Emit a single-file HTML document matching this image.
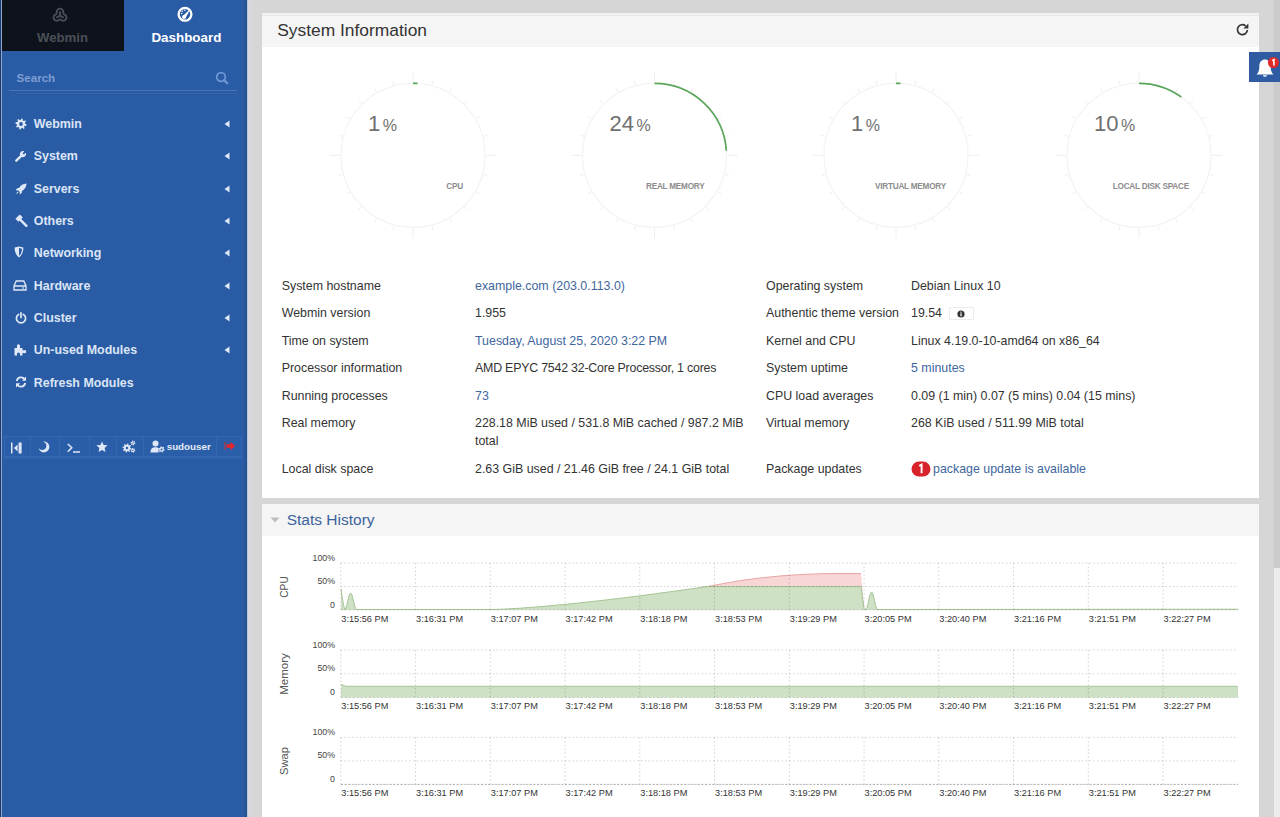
<!DOCTYPE html>
<html><head><meta charset="utf-8"><style>
html,body{margin:0;padding:0;}
body{width:1280px;height:817px;overflow:hidden;position:relative;background:#d6d6d6;font-family:"Liberation Sans", sans-serif;}
.t{position:absolute;white-space:nowrap;line-height:1;}
.r{position:absolute;}
.a{position:absolute;overflow:visible;}
</style></head><body>
<div class="r" style="left:0px;top:0px;width:247px;height:817px;background:#2a5ca6;"></div>
<div class="r" style="left:244px;top:0px;width:3px;height:817px;background:#2a5597;"></div>
<div class="r" style="left:246px;top:0px;width:1px;height:817px;background:#24508f;"></div>
<div class="r" style="left:247px;top:0px;width:1px;height:817px;background:#b9c9e0;"></div>
<div class="r" style="left:248px;top:0px;width:5px;height:817px;background:#d6d8dc;"></div>
<div class="r" style="left:0px;top:0px;width:124px;height:51px;background:#0e131b;"></div>
<div class="r" style="left:0px;top:0px;width:1px;height:817px;background:#1c3a68;"></div>
<div class="r" style="left:1px;top:0px;width:1px;height:817px;background:#8ea7cf;"></div>
<div class="t" style="left:37.00px;top:31.13px;font-size:13.2px;color:#4a4f57;font-weight:bold;">Webmin</div>
<div class="t" style="left:151.40px;top:31.16px;font-size:13.4px;color:#ffffff;font-weight:bold;">Dashboard</div>
<div class="t" style="left:16.50px;top:72.18px;font-size:11.6px;color:#7d9dd2;font-weight:bold;">Search</div>
<div class="r" style="left:9px;top:90px;width:228px;height:1px;background:#4a76b8;"></div>
<div class="r" style="left:16px;top:93px;width:221px;height:1px;background:#3567b0;"></div>
<div class="t" style="left:33.80px;top:118.10px;font-size:12.4px;color:#dbe5f5;font-weight:bold;">Webmin</div>
<svg class="a" style="left:224px;top:120.1px" width="6" height="8"><path d="M5.5 0.5 L0.5 4 L5.5 7.5Z" fill="#dfe8f6"/></svg>
<div class="t" style="left:33.80px;top:150.40px;font-size:12.4px;color:#dbe5f5;font-weight:bold;">System</div>
<svg class="a" style="left:224px;top:152.4px" width="6" height="8"><path d="M5.5 0.5 L0.5 4 L5.5 7.5Z" fill="#dfe8f6"/></svg>
<div class="t" style="left:33.80px;top:182.70px;font-size:12.4px;color:#dbe5f5;font-weight:bold;">Servers</div>
<svg class="a" style="left:224px;top:184.7px" width="6" height="8"><path d="M5.5 0.5 L0.5 4 L5.5 7.5Z" fill="#dfe8f6"/></svg>
<div class="t" style="left:33.80px;top:215.00px;font-size:12.4px;color:#dbe5f5;font-weight:bold;">Others</div>
<svg class="a" style="left:224px;top:217.0px" width="6" height="8"><path d="M5.5 0.5 L0.5 4 L5.5 7.5Z" fill="#dfe8f6"/></svg>
<div class="t" style="left:33.80px;top:247.30px;font-size:12.4px;color:#dbe5f5;font-weight:bold;">Networking</div>
<svg class="a" style="left:224px;top:249.3px" width="6" height="8"><path d="M5.5 0.5 L0.5 4 L5.5 7.5Z" fill="#dfe8f6"/></svg>
<div class="t" style="left:33.80px;top:279.60px;font-size:12.4px;color:#dbe5f5;font-weight:bold;">Hardware</div>
<svg class="a" style="left:224px;top:281.6px" width="6" height="8"><path d="M5.5 0.5 L0.5 4 L5.5 7.5Z" fill="#dfe8f6"/></svg>
<div class="t" style="left:33.80px;top:311.90px;font-size:12.4px;color:#dbe5f5;font-weight:bold;">Cluster</div>
<svg class="a" style="left:224px;top:313.9px" width="6" height="8"><path d="M5.5 0.5 L0.5 4 L5.5 7.5Z" fill="#dfe8f6"/></svg>
<div class="t" style="left:33.80px;top:344.20px;font-size:12.4px;color:#dbe5f5;font-weight:bold;">Un-used Modules</div>
<svg class="a" style="left:224px;top:346.2px" width="6" height="8"><path d="M5.5 0.5 L0.5 4 L5.5 7.5Z" fill="#dfe8f6"/></svg>
<div class="t" style="left:33.80px;top:376.50px;font-size:12.4px;color:#dbe5f5;font-weight:bold;">Refresh Modules</div>
<div class="r" style="left:4px;top:436px;width:238px;height:21px;background:#2b5ea9;border:1px solid #3568b3;box-sizing:border-box"></div>
<div class="r" style="left:4px;top:457px;width:238px;height:2px;background:#3063ad;"></div>
<div class="t" style="left:166.70px;top:442.00px;font-size:9.8px;color:#e3ebf7;font-weight:bold;">sudouser</div>
<div class="r" style="left:1273px;top:0px;width:1px;height:568px;background:#d0d0d0;"></div>
<div class="r" style="left:1274px;top:0px;width:6px;height:568px;background:#cbcbcb;"></div>
<div class="r" style="left:1274px;top:568px;width:6px;height:249px;background:#ececec;"></div>
<div class="r" style="left:262px;top:13px;width:997px;height:485px;background:#ffffff;"></div>
<div class="r" style="left:262px;top:13px;width:997px;height:34px;background:#f5f5f5;"></div>
<div class="r" style="left:262px;top:13px;width:997px;height:2px;background:#f1f1f1;"></div>
<div class="r" style="left:262px;top:15px;width:997px;height:1px;background:#e8e8e8;"></div>
<div class="t" style="left:277.20px;top:21.97px;font-size:17.4px;color:#333333;font-weight:normal;">System Information</div>
<div class="r" style="left:262px;top:504px;width:997px;height:313px;background:#ffffff;"></div>
<div class="r" style="left:262px;top:504px;width:997px;height:32px;background:#f5f5f5;"></div>
<div class="t" style="left:286.70px;top:511.88px;font-size:15.5px;color:#3b639b;font-weight:normal;">Stats History</div>
<svg class="a" style="left:270px;top:517px" width="10" height="6"><path d="M0.5 0.5 L9.5 0.5 L5 5.5Z" fill="#bdbdbd"/></svg>
<svg class="a" style="left:262px;top:47px" width="997" height="200">
<circle cx="151" cy="108.30000000000001" r="72" fill="none" stroke="#f4f4f4" stroke-width="1.3"/>
<line x1="151.00" y1="35.30" x2="151.00" y2="25.30" stroke="#eeeeee" stroke-width="1"/>
<line x1="169.89" y1="37.79" x2="170.93" y2="33.92" stroke="#eeeeee" stroke-width="1"/>
<line x1="187.50" y1="45.08" x2="189.50" y2="41.62" stroke="#eeeeee" stroke-width="1"/>
<line x1="202.62" y1="56.68" x2="205.45" y2="53.85" stroke="#eeeeee" stroke-width="1"/>
<line x1="214.22" y1="71.80" x2="217.68" y2="69.80" stroke="#eeeeee" stroke-width="1"/>
<line x1="221.51" y1="89.41" x2="225.38" y2="88.37" stroke="#eeeeee" stroke-width="1"/>
<line x1="224.00" y1="108.30" x2="234.00" y2="108.30" stroke="#eeeeee" stroke-width="1"/>
<line x1="221.51" y1="127.19" x2="225.38" y2="128.23" stroke="#eeeeee" stroke-width="1"/>
<line x1="214.22" y1="144.80" x2="217.68" y2="146.80" stroke="#eeeeee" stroke-width="1"/>
<line x1="202.62" y1="159.92" x2="205.45" y2="162.75" stroke="#eeeeee" stroke-width="1"/>
<line x1="187.50" y1="171.52" x2="189.50" y2="174.98" stroke="#eeeeee" stroke-width="1"/>
<line x1="169.89" y1="178.81" x2="170.93" y2="182.68" stroke="#eeeeee" stroke-width="1"/>
<line x1="151.00" y1="181.30" x2="151.00" y2="191.30" stroke="#eeeeee" stroke-width="1"/>
<line x1="132.11" y1="178.81" x2="131.07" y2="182.68" stroke="#eeeeee" stroke-width="1"/>
<line x1="114.50" y1="171.52" x2="112.50" y2="174.98" stroke="#eeeeee" stroke-width="1"/>
<line x1="99.38" y1="159.92" x2="96.55" y2="162.75" stroke="#eeeeee" stroke-width="1"/>
<line x1="87.78" y1="144.80" x2="84.32" y2="146.80" stroke="#eeeeee" stroke-width="1"/>
<line x1="80.49" y1="127.19" x2="76.62" y2="128.23" stroke="#eeeeee" stroke-width="1"/>
<line x1="78.00" y1="108.30" x2="68.00" y2="108.30" stroke="#eeeeee" stroke-width="1"/>
<line x1="80.49" y1="89.41" x2="76.62" y2="88.37" stroke="#eeeeee" stroke-width="1"/>
<line x1="87.78" y1="71.80" x2="84.32" y2="69.80" stroke="#eeeeee" stroke-width="1"/>
<line x1="99.38" y1="56.68" x2="96.55" y2="53.85" stroke="#eeeeee" stroke-width="1"/>
<line x1="114.50" y1="45.08" x2="112.50" y2="41.62" stroke="#eeeeee" stroke-width="1"/>
<line x1="132.11" y1="37.79" x2="131.07" y2="33.92" stroke="#eeeeee" stroke-width="1"/>
<path d="M151 36.30000000000001 A72 72 0 0 1 155.52 36.44" fill="none" stroke="#5aa65a" stroke-width="1.7"/>
<circle cx="392.5" cy="108.30000000000001" r="72" fill="none" stroke="#f4f4f4" stroke-width="1.3"/>
<line x1="392.50" y1="35.30" x2="392.50" y2="25.30" stroke="#eeeeee" stroke-width="1"/>
<line x1="411.39" y1="37.79" x2="412.43" y2="33.92" stroke="#eeeeee" stroke-width="1"/>
<line x1="429.00" y1="45.08" x2="431.00" y2="41.62" stroke="#eeeeee" stroke-width="1"/>
<line x1="444.12" y1="56.68" x2="446.95" y2="53.85" stroke="#eeeeee" stroke-width="1"/>
<line x1="455.72" y1="71.80" x2="459.18" y2="69.80" stroke="#eeeeee" stroke-width="1"/>
<line x1="463.01" y1="89.41" x2="466.88" y2="88.37" stroke="#eeeeee" stroke-width="1"/>
<line x1="465.50" y1="108.30" x2="475.50" y2="108.30" stroke="#eeeeee" stroke-width="1"/>
<line x1="463.01" y1="127.19" x2="466.88" y2="128.23" stroke="#eeeeee" stroke-width="1"/>
<line x1="455.72" y1="144.80" x2="459.18" y2="146.80" stroke="#eeeeee" stroke-width="1"/>
<line x1="444.12" y1="159.92" x2="446.95" y2="162.75" stroke="#eeeeee" stroke-width="1"/>
<line x1="429.00" y1="171.52" x2="431.00" y2="174.98" stroke="#eeeeee" stroke-width="1"/>
<line x1="411.39" y1="178.81" x2="412.43" y2="182.68" stroke="#eeeeee" stroke-width="1"/>
<line x1="392.50" y1="181.30" x2="392.50" y2="191.30" stroke="#eeeeee" stroke-width="1"/>
<line x1="373.61" y1="178.81" x2="372.57" y2="182.68" stroke="#eeeeee" stroke-width="1"/>
<line x1="356.00" y1="171.52" x2="354.00" y2="174.98" stroke="#eeeeee" stroke-width="1"/>
<line x1="340.88" y1="159.92" x2="338.05" y2="162.75" stroke="#eeeeee" stroke-width="1"/>
<line x1="329.28" y1="144.80" x2="325.82" y2="146.80" stroke="#eeeeee" stroke-width="1"/>
<line x1="321.99" y1="127.19" x2="318.12" y2="128.23" stroke="#eeeeee" stroke-width="1"/>
<line x1="319.50" y1="108.30" x2="309.50" y2="108.30" stroke="#eeeeee" stroke-width="1"/>
<line x1="321.99" y1="89.41" x2="318.12" y2="88.37" stroke="#eeeeee" stroke-width="1"/>
<line x1="329.28" y1="71.80" x2="325.82" y2="69.80" stroke="#eeeeee" stroke-width="1"/>
<line x1="340.88" y1="56.68" x2="338.05" y2="53.85" stroke="#eeeeee" stroke-width="1"/>
<line x1="356.00" y1="45.08" x2="354.00" y2="41.62" stroke="#eeeeee" stroke-width="1"/>
<line x1="373.61" y1="37.79" x2="372.57" y2="33.92" stroke="#eeeeee" stroke-width="1"/>
<path d="M392.5 36.30000000000001 A72 72 0 0 1 464.36 103.78" fill="none" stroke="#5aa65a" stroke-width="1.7"/>
<circle cx="634" cy="108.30000000000001" r="72" fill="none" stroke="#f4f4f4" stroke-width="1.3"/>
<line x1="634.00" y1="35.30" x2="634.00" y2="25.30" stroke="#eeeeee" stroke-width="1"/>
<line x1="652.89" y1="37.79" x2="653.93" y2="33.92" stroke="#eeeeee" stroke-width="1"/>
<line x1="670.50" y1="45.08" x2="672.50" y2="41.62" stroke="#eeeeee" stroke-width="1"/>
<line x1="685.62" y1="56.68" x2="688.45" y2="53.85" stroke="#eeeeee" stroke-width="1"/>
<line x1="697.22" y1="71.80" x2="700.68" y2="69.80" stroke="#eeeeee" stroke-width="1"/>
<line x1="704.51" y1="89.41" x2="708.38" y2="88.37" stroke="#eeeeee" stroke-width="1"/>
<line x1="707.00" y1="108.30" x2="717.00" y2="108.30" stroke="#eeeeee" stroke-width="1"/>
<line x1="704.51" y1="127.19" x2="708.38" y2="128.23" stroke="#eeeeee" stroke-width="1"/>
<line x1="697.22" y1="144.80" x2="700.68" y2="146.80" stroke="#eeeeee" stroke-width="1"/>
<line x1="685.62" y1="159.92" x2="688.45" y2="162.75" stroke="#eeeeee" stroke-width="1"/>
<line x1="670.50" y1="171.52" x2="672.50" y2="174.98" stroke="#eeeeee" stroke-width="1"/>
<line x1="652.89" y1="178.81" x2="653.93" y2="182.68" stroke="#eeeeee" stroke-width="1"/>
<line x1="634.00" y1="181.30" x2="634.00" y2="191.30" stroke="#eeeeee" stroke-width="1"/>
<line x1="615.11" y1="178.81" x2="614.07" y2="182.68" stroke="#eeeeee" stroke-width="1"/>
<line x1="597.50" y1="171.52" x2="595.50" y2="174.98" stroke="#eeeeee" stroke-width="1"/>
<line x1="582.38" y1="159.92" x2="579.55" y2="162.75" stroke="#eeeeee" stroke-width="1"/>
<line x1="570.78" y1="144.80" x2="567.32" y2="146.80" stroke="#eeeeee" stroke-width="1"/>
<line x1="563.49" y1="127.19" x2="559.62" y2="128.23" stroke="#eeeeee" stroke-width="1"/>
<line x1="561.00" y1="108.30" x2="551.00" y2="108.30" stroke="#eeeeee" stroke-width="1"/>
<line x1="563.49" y1="89.41" x2="559.62" y2="88.37" stroke="#eeeeee" stroke-width="1"/>
<line x1="570.78" y1="71.80" x2="567.32" y2="69.80" stroke="#eeeeee" stroke-width="1"/>
<line x1="582.38" y1="56.68" x2="579.55" y2="53.85" stroke="#eeeeee" stroke-width="1"/>
<line x1="597.50" y1="45.08" x2="595.50" y2="41.62" stroke="#eeeeee" stroke-width="1"/>
<line x1="615.11" y1="37.79" x2="614.07" y2="33.92" stroke="#eeeeee" stroke-width="1"/>
<path d="M634 36.30000000000001 A72 72 0 0 1 638.52 36.44" fill="none" stroke="#5aa65a" stroke-width="1.7"/>
<circle cx="877" cy="108.30000000000001" r="72" fill="none" stroke="#f4f4f4" stroke-width="1.3"/>
<line x1="877.00" y1="35.30" x2="877.00" y2="25.30" stroke="#eeeeee" stroke-width="1"/>
<line x1="895.89" y1="37.79" x2="896.93" y2="33.92" stroke="#eeeeee" stroke-width="1"/>
<line x1="913.50" y1="45.08" x2="915.50" y2="41.62" stroke="#eeeeee" stroke-width="1"/>
<line x1="928.62" y1="56.68" x2="931.45" y2="53.85" stroke="#eeeeee" stroke-width="1"/>
<line x1="940.22" y1="71.80" x2="943.68" y2="69.80" stroke="#eeeeee" stroke-width="1"/>
<line x1="947.51" y1="89.41" x2="951.38" y2="88.37" stroke="#eeeeee" stroke-width="1"/>
<line x1="950.00" y1="108.30" x2="960.00" y2="108.30" stroke="#eeeeee" stroke-width="1"/>
<line x1="947.51" y1="127.19" x2="951.38" y2="128.23" stroke="#eeeeee" stroke-width="1"/>
<line x1="940.22" y1="144.80" x2="943.68" y2="146.80" stroke="#eeeeee" stroke-width="1"/>
<line x1="928.62" y1="159.92" x2="931.45" y2="162.75" stroke="#eeeeee" stroke-width="1"/>
<line x1="913.50" y1="171.52" x2="915.50" y2="174.98" stroke="#eeeeee" stroke-width="1"/>
<line x1="895.89" y1="178.81" x2="896.93" y2="182.68" stroke="#eeeeee" stroke-width="1"/>
<line x1="877.00" y1="181.30" x2="877.00" y2="191.30" stroke="#eeeeee" stroke-width="1"/>
<line x1="858.11" y1="178.81" x2="857.07" y2="182.68" stroke="#eeeeee" stroke-width="1"/>
<line x1="840.50" y1="171.52" x2="838.50" y2="174.98" stroke="#eeeeee" stroke-width="1"/>
<line x1="825.38" y1="159.92" x2="822.55" y2="162.75" stroke="#eeeeee" stroke-width="1"/>
<line x1="813.78" y1="144.80" x2="810.32" y2="146.80" stroke="#eeeeee" stroke-width="1"/>
<line x1="806.49" y1="127.19" x2="802.62" y2="128.23" stroke="#eeeeee" stroke-width="1"/>
<line x1="804.00" y1="108.30" x2="794.00" y2="108.30" stroke="#eeeeee" stroke-width="1"/>
<line x1="806.49" y1="89.41" x2="802.62" y2="88.37" stroke="#eeeeee" stroke-width="1"/>
<line x1="813.78" y1="71.80" x2="810.32" y2="69.80" stroke="#eeeeee" stroke-width="1"/>
<line x1="825.38" y1="56.68" x2="822.55" y2="53.85" stroke="#eeeeee" stroke-width="1"/>
<line x1="840.50" y1="45.08" x2="838.50" y2="41.62" stroke="#eeeeee" stroke-width="1"/>
<line x1="858.11" y1="37.79" x2="857.07" y2="33.92" stroke="#eeeeee" stroke-width="1"/>
<path d="M877 36.30000000000001 A72 72 0 0 1 919.32 50.05" fill="none" stroke="#5aa65a" stroke-width="1.7"/>
</svg>
<div class="t" style="left:368.00px;top:112.98px;font-size:22px;color:#707070;font-weight:normal;">1<span style="font-size:16px;margin-left:2.5px">%</span></div>
<div class="t" style="right:817.0px;top:182.5px;font-size:8.2px;color:#8c8c8c;font-weight:bold;letter-spacing:-0.22px">CPU</div>
<div class="t" style="left:609.50px;top:112.98px;font-size:22px;color:#707070;font-weight:normal;">24<span style="font-size:16px;margin-left:2.5px">%</span></div>
<div class="t" style="right:575.5px;top:182.5px;font-size:8.2px;color:#8c8c8c;font-weight:bold;letter-spacing:-0.22px">REAL MEMORY</div>
<div class="t" style="left:851.00px;top:112.98px;font-size:22px;color:#707070;font-weight:normal;">1<span style="font-size:16px;margin-left:2.5px">%</span></div>
<div class="t" style="right:334.0px;top:182.5px;font-size:8.2px;color:#8c8c8c;font-weight:bold;letter-spacing:-0.22px">VIRTUAL MEMORY</div>
<div class="t" style="left:1094.00px;top:112.98px;font-size:22px;color:#707070;font-weight:normal;">10<span style="font-size:16px;margin-left:2.5px">%</span></div>
<div class="t" style="right:91.0px;top:182.5px;font-size:8.2px;color:#8c8c8c;font-weight:bold;letter-spacing:-0.22px">LOCAL DISK SPACE</div>
<div class="t" style="left:281.70px;top:279.50px;font-size:12.4px;color:#333;font-weight:normal;">System hostname</div>
<div class="t" style="left:475.00px;top:279.50px;font-size:12.4px;color:#333;font-weight:normal;"><span style="color:#41669e">example.com (203.0.113.0)</span></div>
<div class="t" style="left:281.70px;top:307.00px;font-size:12.4px;color:#333;font-weight:normal;">Webmin version</div>
<div class="t" style="left:475.00px;top:307.00px;font-size:12.4px;color:#333;font-weight:normal;">1.955</div>
<div class="t" style="left:281.70px;top:334.50px;font-size:12.4px;color:#333;font-weight:normal;">Time on system</div>
<div class="t" style="left:475.00px;top:334.50px;font-size:12.4px;color:#333;font-weight:normal;"><span style="color:#41669e">Tuesday, August 25, 2020 3:22 PM</span></div>
<div class="t" style="left:281.70px;top:362.00px;font-size:12.4px;color:#333;font-weight:normal;">Processor information</div>
<div class="t" style="left:475.00px;top:362.00px;font-size:12.4px;color:#333;font-weight:normal;letter-spacing:-0.22px">AMD EPYC 7542 32-Core Processor, 1 cores</div>
<div class="t" style="left:281.70px;top:389.50px;font-size:12.4px;color:#333;font-weight:normal;">Running processes</div>
<div class="t" style="left:475.00px;top:389.50px;font-size:12.4px;color:#333;font-weight:normal;"><span style="color:#41669e">73</span></div>
<div class="t" style="left:281.70px;top:417.00px;font-size:12.4px;color:#333;font-weight:normal;">Real memory</div>
<div class="t" style="left:475.00px;top:417.00px;font-size:12.4px;color:#333;font-weight:normal;">228.18 MiB used / 531.8 MiB cached / 987.2 MiB</div>
<div class="t" style="left:475.00px;top:434.50px;font-size:12.4px;color:#333;font-weight:normal;">total</div>
<div class="t" style="left:281.70px;top:462.50px;font-size:12.4px;color:#333;font-weight:normal;">Local disk space</div>
<div class="t" style="left:475.00px;top:462.50px;font-size:12.4px;color:#333;font-weight:normal;">2.63 GiB used / 21.46 GiB free / 24.1 GiB total</div>
<div class="t" style="left:766.00px;top:279.50px;font-size:12.4px;color:#333;font-weight:normal;">Operating system</div>
<div class="t" style="left:911.00px;top:279.50px;font-size:12.4px;color:#333;font-weight:normal;">Debian Linux 10</div>
<div class="t" style="left:766.00px;top:307.00px;font-size:12.4px;color:#333;font-weight:normal;">Authentic theme version</div>
<div class="t" style="left:911.00px;top:307.00px;font-size:12.4px;color:#333;font-weight:normal;">19.54</div>
<div class="t" style="left:766.00px;top:334.50px;font-size:12.4px;color:#333;font-weight:normal;">Kernel and CPU</div>
<div class="t" style="left:911.00px;top:334.50px;font-size:12.4px;color:#333;font-weight:normal;">Linux 4.19.0-10-amd64 on x86_64</div>
<div class="t" style="left:766.00px;top:362.00px;font-size:12.4px;color:#333;font-weight:normal;">System uptime</div>
<div class="t" style="left:911.00px;top:362.00px;font-size:12.4px;color:#333;font-weight:normal;"><span style="color:#41669e">5 minutes</span></div>
<div class="t" style="left:766.00px;top:389.50px;font-size:12.4px;color:#333;font-weight:normal;">CPU load averages</div>
<div class="t" style="left:911.00px;top:389.50px;font-size:12.4px;color:#333;font-weight:normal;">0.09 (1 min) 0.07 (5 mins) 0.04 (15 mins)</div>
<div class="t" style="left:766.00px;top:417.00px;font-size:12.4px;color:#333;font-weight:normal;">Virtual memory</div>
<div class="t" style="left:911.00px;top:417.00px;font-size:12.4px;color:#333;font-weight:normal;">268 KiB used / 511.99 MiB total</div>
<div class="t" style="left:766.00px;top:462.50px;font-size:12.4px;color:#333;font-weight:normal;">Package updates</div>
<div class="t" style="left:933.00px;top:462.50px;font-size:12.4px;color:#41669e;font-weight:normal;">package update is available</div>
<svg class="a" style="left:50.30px;top:4.90px" width="20" height="20" viewBox="0 0 20 20"><g transform="translate(10 10.6) scale(1.12)" stroke="#4a4f57" stroke-width="1.65" fill="none" stroke-linejoin="round"><path transform="rotate(0)" d="M-2.9 -1.6 L-2.9 -3.3 A2.9 2.9 0 0 1 2.9 -3.3 L2.9 -1.6 M0 0 L0 -3.8"/><path transform="rotate(120)" d="M-2.9 -1.6 L-2.9 -3.3 A2.9 2.9 0 0 1 2.9 -3.3 L2.9 -1.6 M0 0 L0 -3.8"/><path transform="rotate(240)" d="M-2.9 -1.6 L-2.9 -3.3 A2.9 2.9 0 0 1 2.9 -3.3 L2.9 -1.6 M0 0 L0 -3.8"/></g></svg>
<svg class="a" style="left:177.10px;top:5.70px" width="17" height="17" viewBox="0 0 17 17"><circle cx="8" cy="8.3" r="6.4" fill="none" stroke="#fff" stroke-width="2.3"/><path d="M5.6 10.2 L13.6 2.6 L8.6 12Z" fill="#fff"/><circle cx="7" cy="11" r="2" fill="#fff"/><circle cx="4.6" cy="7.6" r="0.75" fill="#fff"/><circle cx="5.4" cy="5.2" r="0.75" fill="#fff"/><circle cx="7.8" cy="4.2" r="0.75" fill="#fff"/></svg>
<svg class="a" style="left:215.00px;top:71.00px" width="14" height="14" viewBox="0 0 14 14"><circle cx="6" cy="6" r="4.3" fill="none" stroke="#6f98d8" stroke-width="1.7"/><path d="M9.2 9.2 L12.2 12.2" stroke="#6f98d8" stroke-width="2.2" stroke-linecap="round"/></svg>
<svg class="a" style="left:14.50px;top:118.20px" width="12" height="12" viewBox="0 0 12 12"><path fill-rule="evenodd" d="M11.57,6.55 L11.36,7.63 L9.53,7.89 L9.09,8.54 L9.55,10.33 L8.64,10.94 L7.16,9.83 L6.39,9.98 L5.45,11.57 L4.37,11.36 L4.11,9.53 L3.46,9.09 L1.67,9.55 L1.06,8.64 L2.17,7.16 L2.02,6.39 L0.43,5.45 L0.64,4.37 L2.47,4.11 L2.91,3.46 L2.45,1.67 L3.36,1.06 L4.84,2.17 L5.61,2.02 L6.55,0.43 L7.63,0.64 L7.89,2.47 L8.54,2.91 L10.33,2.45 L10.94,3.36 L9.83,4.84 L9.98,5.61Z M7.9,6 A1.9 1.9 0 1 0 4.1,6 A1.9 1.9 0 1 0 7.9,6Z" fill="#dfe8f6"/></svg>
<svg class="a" style="left:14.80px;top:150.40px" width="12" height="12" viewBox="0 0 12 12"><path d="M1.3 10.7 L6.2 5.8" stroke="#dfe8f6" stroke-width="2.4" stroke-linecap="round"/><path d="M5.3 5.9 A3.3 3.3 0 0 1 9.4 1.2 L7.6 3.3 L8.8 4.6 L10.9 2.7 A3.3 3.3 0 0 1 6.3 6.8Z" fill="#dfe8f6"/></svg>
<svg class="a" style="left:15.00px;top:182.70px" width="12" height="12" viewBox="0 0 12 12"><path d="M11.5 0.5 C8 0.6 5.5 2.5 4 5 L2.2 5.2 L0.6 7.2 L3.2 7.4 L4.6 8.8 L4.8 11.4 L6.8 9.8 L7 8 C9.5 6.5 11.4 4 11.5 0.5Z" fill="#dfe8f6"/><path d="M2.6 8.6 L0.6 11.4 L3.4 9.4Z" fill="#dfe8f6"/></svg>
<svg class="a" style="left:14.70px;top:214.20px" width="13" height="13" viewBox="0 0 13 13"><path d="M0.4 4.8 L4.8 0.4 L7.8 3.4 L3.4 7.8Z" fill="#dfe8f6"/><path d="M5.2 5.6 L11.4 11.8" stroke="#dfe8f6" stroke-width="2.4" stroke-linecap="round"/></svg>
<svg class="a" style="left:14.40px;top:246.20px" width="10" height="12" viewBox="0 0 10 12"><path d="M0.6 1.6 L5 0.4 L9.4 1.6 C9.4 6.5 7.5 9.6 5 11.5 C2.5 9.6 0.6 6.5 0.6 1.6Z" fill="#dfe8f6"/><path d="M5 2 L8 2.7 C7.9 6.2 6.8 8.4 5 9.8Z" fill="#2a5ca6"/></svg>
<svg class="a" style="left:13.40px;top:280.30px" width="14" height="11" viewBox="0 0 14 11"><path d="M1 6 L3.2 1 L10.8 1 L13 6 L13 10 L1 10Z M1 6 L13 6" fill="none" stroke="#dfe8f6" stroke-width="1.3"/><path d="M9 8 L11 8" stroke="#dfe8f6" stroke-width="1.2"/></svg>
<svg class="a" style="left:14.90px;top:311.70px" width="12" height="12" viewBox="0 0 12 12"><path d="M3.6 2.4 A4.6 4.6 0 1 0 8.4 2.4" fill="none" stroke="#dfe8f6" stroke-width="1.7" stroke-linecap="round"/><path d="M6 0.8 L6 5.6" stroke="#dfe8f6" stroke-width="1.7" stroke-linecap="round"/></svg>
<svg class="a" style="left:14.30px;top:343.70px" width="13" height="12" viewBox="0 0 13 12"><path d="M0.5 4 L3 4 L3 2.5 A1.6 1.6 0 1 1 6 2.5 L6 4 L8.5 4 L8.5 6.2 L10.2 6.2 A1.5 1.5 0 1 1 10.2 9 L8.5 9 L8.5 11.5 L6 11.5 L6 10 A1.5 1.5 0 1 0 3 10 L3 11.5 L0.5 11.5Z" fill="#dfe8f6"/></svg>
<svg class="a" style="left:14.80px;top:376.20px" width="12" height="12" viewBox="0 0 12 12"><path d="M1.8 5 A4.3 4.3 0 0 1 9.6 3.2" fill="none" stroke="#dfe8f6" stroke-width="1.8"/><path d="M11 0.6 L11 4.8 L6.8 4.8Z" fill="#dfe8f6"/><path d="M10.2 7 A4.3 4.3 0 0 1 2.4 8.8" fill="none" stroke="#dfe8f6" stroke-width="1.8"/><path d="M1 11.4 L1 7.2 L5.2 7.2Z" fill="#dfe8f6"/></svg>
<div class="r" style="left:29.5px;top:437px;width:1px;height:19px;background:#3565ae;"></div>
<div class="r" style="left:58.5px;top:437px;width:1px;height:19px;background:#3565ae;"></div>
<div class="r" style="left:89px;top:437px;width:1px;height:19px;background:#3565ae;"></div>
<div class="r" style="left:115.5px;top:437px;width:1px;height:19px;background:#3565ae;"></div>
<div class="r" style="left:142.5px;top:437px;width:1px;height:19px;background:#3565ae;"></div>
<div class="r" style="left:215.5px;top:437px;width:1px;height:19px;background:#3565ae;"></div>
<svg class="a" style="left:9.00px;top:441.50px" width="14" height="12" viewBox="0 0 14 12"><rect x="2" y="0.5" width="1.5" height="11" fill="#dfe8f6"/><path d="M8.6 2.6 L5 6 L8.6 9.4Z" fill="#dfe8f6"/><rect x="9.6" y="0.5" width="3" height="11" fill="#dfe8f6"/></svg>
<svg class="a" style="left:38.40px;top:440.60px" width="12" height="12" viewBox="0 0 12 12"><path d="M5.06 0.68 A5.4 5.4 0 1 1 0.68 6.94 A4.2 4.2 0 1 0 5.06 0.68Z" fill="#dfe8f6"/></svg>
<svg class="a" style="left:66.50px;top:442.50px" width="14" height="10" viewBox="0 0 14 10"><path d="M0.8 1 L4.8 4.8 L0.8 8.6" fill="none" stroke="#dfe8f6" stroke-width="1.5"/><path d="M6 9 L13 9" stroke="#dfe8f6" stroke-width="1.5"/></svg>
<svg class="a" style="left:95.50px;top:440.80px" width="12" height="12" viewBox="0 0 12 12"><path d="M6 0.4 L7.6 4 L11.6 4.3 L8.6 7 L9.5 11 L6 8.9 L2.5 11 L3.4 7 L0.4 4.3 L4.4 4Z" fill="#dfe8f6"/></svg>
<svg class="a" style="left:122.30px;top:440.30px" width="14" height="13" viewBox="0 0 14 13"><path fill-rule="evenodd" d="M9.58,8.45 L9.40,9.34 L7.82,9.51 L7.47,10.03 L7.92,11.56 L7.17,12.06 L5.93,11.06 L5.31,11.18 L4.55,12.58 L3.66,12.40 L3.49,10.82 L2.97,10.47 L1.44,10.92 L0.94,10.17 L1.94,8.93 L1.82,8.31 L0.42,7.55 L0.60,6.66 L2.18,6.49 L2.53,5.97 L2.08,4.44 L2.83,3.94 L4.07,4.94 L4.69,4.82 L5.45,3.42 L6.34,3.60 L6.51,5.18 L7.03,5.53 L8.56,5.08 L9.06,5.83 L8.06,7.07 L8.18,7.69Z M6.3,8 A1.3 1.3 0 1 0 3.7,8 A1.3 1.3 0 1 0 6.3,8Z" fill="#dfe8f6"/><path fill-rule="evenodd" d="M13.38,3.31 L13.22,3.92 L12.35,4.03 L12.03,4.35 L11.92,5.22 L11.31,5.38 L10.78,4.69 L10.35,4.57 L9.54,4.90 L9.10,4.46 L9.43,3.65 L9.31,3.22 L8.62,2.69 L8.78,2.08 L9.65,1.97 L9.97,1.65 L10.08,0.78 L10.69,0.62 L11.22,1.31 L11.65,1.43 L12.46,1.10 L12.90,1.54 L12.57,2.35 L12.69,2.78Z M11.7,3 A0.7 0.7 0 1 0 10.3,3 A0.7 0.7 0 1 0 11.7,3Z" fill="#dfe8f6"/><path fill-rule="evenodd" d="M13.38,10.71 L13.22,11.32 L12.35,11.43 L12.03,11.75 L11.92,12.62 L11.31,12.78 L10.78,12.09 L10.35,11.97 L9.54,12.30 L9.10,11.86 L9.43,11.05 L9.31,10.62 L8.62,10.09 L8.78,9.48 L9.65,9.37 L9.97,9.05 L10.08,8.18 L10.69,8.02 L11.22,8.71 L11.65,8.83 L12.46,8.50 L12.90,8.94 L12.57,9.75 L12.69,10.18Z M11.7,10.4 A0.7 0.7 0 1 0 10.3,10.4 A0.7 0.7 0 1 0 11.7,10.4Z" fill="#dfe8f6"/></svg>
<svg class="a" style="left:149.50px;top:440.00px" width="15" height="13" viewBox="0 0 15 13"><circle cx="5.5" cy="3.5" r="3" fill="#dfe8f6"/><path d="M0.5 12.5 C0.5 8.5 2.5 7.3 5.5 7.3 C7 7.3 8 7.6 8.6 8 L8.6 12.5Z" fill="#dfe8f6"/><path fill-rule="evenodd" d="M14.77,9.82 L14.56,10.62 L13.35,10.74 L12.94,11.15 L12.82,12.36 L12.02,12.57 L11.31,11.58 L10.76,11.43 L9.65,11.94 L9.06,11.35 L9.57,10.24 L9.42,9.69 L8.43,8.98 L8.64,8.18 L9.85,8.06 L10.26,7.65 L10.38,6.44 L11.18,6.23 L11.89,7.22 L12.44,7.37 L13.55,6.86 L14.14,7.45 L13.63,8.56 L13.78,9.11Z M12.6,9.4 A1.0 1.0 0 1 0 10.6,9.4 A1.0 1.0 0 1 0 12.6,9.4Z" fill="#dfe8f6"/></svg>
<svg class="a" style="left:224.30px;top:441.40px" width="13" height="10" viewBox="0 0 13 10"><path d="M2.5 3.2 L6.6 3.2 L6.6 0.8 L11 5 L6.6 9.2 L6.6 6.8 L2.5 6.8Z" fill="#e8262a"/><path d="M2.2 1.6 L0.9 1.6 L0.9 8.4 L2.2 8.4" fill="none" stroke="#c2343f" stroke-width="1"/></svg>
<svg class="a" style="left:1235.20px;top:22.30px" width="16" height="16" viewBox="0 0 16 16"><path d="M12.4 8 A5 5 0 1 1 10.6 3.8" fill="none" stroke="#333" stroke-width="1.7"/><path d="M13.4 1.4 L13.4 6.4 L8.4 6.4Z" fill="#333"/></svg>
<div class="r" style="left:1249px;top:52px;width:31px;height:30px;background:#2f5ba3;"></div>
<svg class="a" style="left:1254.00px;top:55.00px" width="24" height="24" viewBox="0 0 24 24"><path d="M2.6 19.4 C4.8 17.4 5.4 14.6 5.4 10.6 C5.4 7.2 7.8 4.6 11 4.6 C14.2 4.6 16.6 7.2 16.6 10.6 C16.6 14.6 17.2 17.4 19.4 19.4Z" fill="#fff"/><path d="M8.8 20.2 A2.3 2.3 0 0 0 13.2 20.2Z" fill="#fff"/><circle cx="19.5" cy="7.5" r="5.6" fill="#e02a2a"/><path d="M18.2 5.6 L19.9 4.7 L19.9 10.6" fill="none" stroke="#fff" stroke-width="1.6"/></svg>
<div class="r" style="left:949px;top:307px;width:25px;height:13px;background:#ffffff;border:1px solid #ececec;box-sizing:border-box;border-radius:1px"></div>
<svg class="a" style="left:957.30px;top:309.70px" width="8" height="8" viewBox="0 0 8 8"><circle cx="4" cy="4" r="3.6" fill="#333"/><rect x="3.4" y="3.3" width="1.2" height="3" fill="#fff"/><circle cx="4" cy="2.2" r="0.65" fill="#fff"/></svg>
<svg class="a" style="left:910.50px;top:461.00px" width="20" height="16" viewBox="0 0 20 16"><rect x="0.5" y="0.5" width="19" height="15" rx="7.5" fill="#d9232b"/><path d="M8.2 4.8 L10.6 3.6 L10.6 12.3" fill="none" stroke="#fff" stroke-width="1.9"/></svg>
<svg class="a" style="left:0px;top:0px" width="1280" height="817">
<path d="M341 610 L341.0 589.0 L341.6 593.3 L342.3 597.4 L342.9 601.2 L343.5 604.6 L344.2 607.5 L344.8 609.5 L345.3 609.5 L346.6 606.0 L348.0 600.0 L349.3 595.0 L350.6 593.0 L352.0 595.0 L353.3 600.0 L354.7 606.0 L356.0 609.5 L358.0 609.5 L361.0 609.5 L364.0 609.5 L367.0 609.5 L370.0 609.5 L373.0 609.5 L376.0 609.5 L379.0 609.5 L382.0 609.5 L385.0 609.5 L388.0 609.5 L391.0 609.5 L394.0 609.5 L397.0 609.5 L400.0 609.5 L403.0 609.5 L406.0 609.5 L409.0 609.5 L412.0 609.5 L415.0 609.5 L418.0 609.5 L421.0 609.5 L424.0 609.5 L427.0 609.5 L430.0 609.5 L433.0 609.5 L436.0 609.5 L439.0 609.5 L442.0 609.5 L445.0 609.5 L448.0 609.5 L451.0 609.5 L454.0 609.5 L457.0 609.5 L460.0 609.5 L463.0 609.5 L466.0 609.5 L469.0 609.5 L472.0 609.5 L475.0 609.5 L478.0 609.5 L481.0 609.5 L484.0 609.5 L487.0 609.5 L490.0 609.5 L493.0 609.5 L496.0 609.4 L499.0 609.3 L502.0 609.2 L505.0 609.1 L508.0 608.9 L511.0 608.7 L514.0 608.6 L517.0 608.4 L520.0 608.2 L523.0 608.0 L526.0 607.7 L529.0 607.5 L532.0 607.3 L535.0 607.1 L538.0 606.8 L541.0 606.6 L544.0 606.3 L547.0 606.0 L550.0 605.8 L553.0 605.5 L556.0 605.2 L559.0 604.9 L562.0 604.7 L565.0 604.4 L568.0 604.1 L571.0 603.8 L574.0 603.5 L577.0 603.2 L580.0 602.8 L583.0 602.5 L586.0 602.2 L589.0 601.9 L592.0 601.5 L595.0 601.2 L598.0 600.9 L601.0 600.5 L604.0 600.2 L607.0 599.8 L610.0 599.5 L613.0 599.1 L616.0 598.8 L619.0 598.4 L622.0 598.1 L625.0 597.7 L628.0 597.3 L631.0 596.9 L634.0 596.6 L637.0 596.2 L640.0 595.8 L643.0 595.4 L646.0 595.0 L649.0 594.6 L652.0 594.2 L655.0 593.8 L658.0 593.4 L661.0 593.0 L664.0 592.6 L667.0 592.2 L670.0 591.8 L673.0 591.4 L676.0 591.0 L679.0 590.6 L682.0 590.1 L685.0 589.7 L688.0 589.3 L691.0 588.9 L694.0 588.4 L697.0 588.0 L700.0 587.6 L703.0 587.1 L706.0 586.7 L709.0 586.2 L712.0 585.7 L715.0 585.1 L718.0 584.5 L721.0 584.0 L724.0 583.4 L727.0 582.9 L730.0 582.4 L733.0 581.9 L736.0 581.4 L739.0 580.9 L742.0 580.4 L745.0 580.0 L748.0 579.6 L751.0 579.2 L754.0 578.8 L757.0 578.4 L760.0 578.1 L763.0 577.7 L766.0 577.4 L769.0 577.1 L772.0 576.8 L775.0 576.5 L778.0 576.2 L781.0 575.9 L784.0 575.7 L787.0 575.5 L790.0 575.2 L793.0 575.0 L796.0 574.9 L799.0 574.7 L802.0 574.5 L805.0 574.4 L808.0 574.2 L811.0 574.1 L814.0 574.0 L817.0 573.9 L820.0 573.8 L823.0 573.7 L826.0 573.7 L829.0 573.6 L832.0 573.6 L835.0 573.5 L838.0 573.5 L841.0 573.5 L844.0 573.5 L847.0 573.5 L850.0 573.5 L853.0 573.5 L856.0 573.5 L859.0 573.5 L861.0 574.0 L864.2 609.5 L866.2 609.5 L867.6 605.7 L868.9 599.4 L870.2 594.1 L871.6 592.0 L873.0 594.1 L874.3 599.4 L875.6 605.7 L877.0 609.5 L1238.0 609.2 L1238 610Z" fill="#f9d6d6"/>
<path d="M700.0 587.6 L703.0 587.1 L706.0 586.7 L709.0 586.2 L712.0 585.7 L715.0 585.1 L718.0 584.5 L721.0 584.0 L724.0 583.4 L727.0 582.9 L730.0 582.4 L733.0 581.9 L736.0 581.4 L739.0 580.9 L742.0 580.4 L745.0 580.0 L748.0 579.6 L751.0 579.2 L754.0 578.8 L757.0 578.4 L760.0 578.1 L763.0 577.7 L766.0 577.4 L769.0 577.1 L772.0 576.8 L775.0 576.5 L778.0 576.2 L781.0 575.9 L784.0 575.7 L787.0 575.5 L790.0 575.2 L793.0 575.0 L796.0 574.9 L799.0 574.7 L802.0 574.5 L805.0 574.4 L808.0 574.2 L811.0 574.1 L814.0 574.0 L817.0 573.9 L820.0 573.8 L823.0 573.7 L826.0 573.7 L829.0 573.6 L832.0 573.6 L835.0 573.5 L838.0 573.5 L841.0 573.5 L844.0 573.5 L847.0 573.5 L850.0 573.5 L853.0 573.5 L856.0 573.5 L859.0 573.5 L861.0 574.0" fill="none" stroke="#e8a4a4" stroke-width="1"/>
<path d="M341 610 L341.0 589.0 L341.6 593.3 L342.3 597.4 L342.9 601.2 L343.5 604.6 L344.2 607.5 L344.8 609.5 L345.3 609.5 L346.6 606.0 L348.0 600.0 L349.3 595.0 L350.6 593.0 L352.0 595.0 L353.3 600.0 L354.7 606.0 L356.0 609.5 L358.0 609.5 L361.0 609.5 L364.0 609.5 L367.0 609.5 L370.0 609.5 L373.0 609.5 L376.0 609.5 L379.0 609.5 L382.0 609.5 L385.0 609.5 L388.0 609.5 L391.0 609.5 L394.0 609.5 L397.0 609.5 L400.0 609.5 L403.0 609.5 L406.0 609.5 L409.0 609.5 L412.0 609.5 L415.0 609.5 L418.0 609.5 L421.0 609.5 L424.0 609.5 L427.0 609.5 L430.0 609.5 L433.0 609.5 L436.0 609.5 L439.0 609.5 L442.0 609.5 L445.0 609.5 L448.0 609.5 L451.0 609.5 L454.0 609.5 L457.0 609.5 L460.0 609.5 L463.0 609.5 L466.0 609.5 L469.0 609.5 L472.0 609.5 L475.0 609.5 L478.0 609.5 L481.0 609.5 L484.0 609.5 L487.0 609.5 L490.0 609.5 L493.0 609.5 L496.0 609.4 L499.0 609.3 L502.0 609.2 L505.0 609.1 L508.0 608.9 L511.0 608.7 L514.0 608.6 L517.0 608.4 L520.0 608.2 L523.0 608.0 L526.0 607.7 L529.0 607.5 L532.0 607.3 L535.0 607.1 L538.0 606.8 L541.0 606.6 L544.0 606.3 L547.0 606.0 L550.0 605.8 L553.0 605.5 L556.0 605.2 L559.0 604.9 L562.0 604.7 L565.0 604.4 L568.0 604.1 L571.0 603.8 L574.0 603.5 L577.0 603.2 L580.0 602.8 L583.0 602.5 L586.0 602.2 L589.0 601.9 L592.0 601.5 L595.0 601.2 L598.0 600.9 L601.0 600.5 L604.0 600.2 L607.0 599.8 L610.0 599.5 L613.0 599.1 L616.0 598.8 L619.0 598.4 L622.0 598.1 L625.0 597.7 L628.0 597.3 L631.0 596.9 L634.0 596.6 L637.0 596.2 L640.0 595.8 L643.0 595.4 L646.0 595.0 L649.0 594.6 L652.0 594.2 L655.0 593.8 L658.0 593.4 L661.0 593.0 L664.0 592.6 L667.0 592.2 L670.0 591.8 L673.0 591.4 L676.0 591.0 L679.0 590.6 L682.0 590.1 L685.0 589.7 L688.0 589.3 L691.0 588.9 L694.0 588.4 L697.0 588.0 L700.0 587.6 L703.0 587.1 L706.0 586.7 L709.0 586.6 L712.0 586.6 L715.0 586.6 L718.0 586.6 L721.0 586.6 L724.0 586.6 L727.0 586.6 L730.0 586.6 L733.0 586.6 L736.0 586.6 L739.0 586.6 L742.0 586.6 L745.0 586.6 L748.0 586.6 L751.0 586.6 L754.0 586.6 L757.0 586.6 L760.0 586.6 L763.0 586.6 L766.0 586.6 L769.0 586.6 L772.0 586.6 L775.0 586.6 L778.0 586.6 L781.0 586.6 L784.0 586.6 L787.0 586.6 L790.0 586.6 L793.0 586.6 L796.0 586.6 L799.0 586.6 L802.0 586.6 L805.0 586.6 L808.0 586.6 L811.0 586.6 L814.0 586.6 L817.0 586.6 L820.0 586.6 L823.0 586.6 L826.0 586.6 L829.0 586.6 L832.0 586.6 L835.0 586.6 L838.0 586.6 L841.0 586.6 L844.0 586.6 L847.0 586.6 L850.0 586.6 L853.0 586.6 L856.0 586.6 L859.0 586.6 L861.0 586.6 L864.2 609.5 L866.2 609.5 L867.6 605.7 L868.9 599.4 L870.2 594.1 L871.6 592.0 L873.0 594.1 L874.3 599.4 L875.6 605.7 L877.0 609.5 L1238.0 609.2 L1238 610Z" fill="#cfe1c4"/>
<path d="M341.0 589.0 L341.6 593.3 L342.3 597.4 L342.9 601.2 L343.5 604.6 L344.2 607.5 L344.8 609.5 L345.3 609.5 L346.6 606.0 L348.0 600.0 L349.3 595.0 L350.6 593.0 L352.0 595.0 L353.3 600.0 L354.7 606.0 L356.0 609.5 L358.0 609.5 L361.0 609.5 L364.0 609.5 L367.0 609.5 L370.0 609.5 L373.0 609.5 L376.0 609.5 L379.0 609.5 L382.0 609.5 L385.0 609.5 L388.0 609.5 L391.0 609.5 L394.0 609.5 L397.0 609.5 L400.0 609.5 L403.0 609.5 L406.0 609.5 L409.0 609.5 L412.0 609.5 L415.0 609.5 L418.0 609.5 L421.0 609.5 L424.0 609.5 L427.0 609.5 L430.0 609.5 L433.0 609.5 L436.0 609.5 L439.0 609.5 L442.0 609.5 L445.0 609.5 L448.0 609.5 L451.0 609.5 L454.0 609.5 L457.0 609.5 L460.0 609.5 L463.0 609.5 L466.0 609.5 L469.0 609.5 L472.0 609.5 L475.0 609.5 L478.0 609.5 L481.0 609.5 L484.0 609.5 L487.0 609.5 L490.0 609.5 L493.0 609.5 L496.0 609.4 L499.0 609.3 L502.0 609.2 L505.0 609.1 L508.0 608.9 L511.0 608.7 L514.0 608.6 L517.0 608.4 L520.0 608.2 L523.0 608.0 L526.0 607.7 L529.0 607.5 L532.0 607.3 L535.0 607.1 L538.0 606.8 L541.0 606.6 L544.0 606.3 L547.0 606.0 L550.0 605.8 L553.0 605.5 L556.0 605.2 L559.0 604.9 L562.0 604.7 L565.0 604.4 L568.0 604.1 L571.0 603.8 L574.0 603.5 L577.0 603.2 L580.0 602.8 L583.0 602.5 L586.0 602.2 L589.0 601.9 L592.0 601.5 L595.0 601.2 L598.0 600.9 L601.0 600.5 L604.0 600.2 L607.0 599.8 L610.0 599.5 L613.0 599.1 L616.0 598.8 L619.0 598.4 L622.0 598.1 L625.0 597.7 L628.0 597.3 L631.0 596.9 L634.0 596.6 L637.0 596.2 L640.0 595.8 L643.0 595.4 L646.0 595.0 L649.0 594.6 L652.0 594.2 L655.0 593.8 L658.0 593.4 L661.0 593.0 L664.0 592.6 L667.0 592.2 L670.0 591.8 L673.0 591.4 L676.0 591.0 L679.0 590.6 L682.0 590.1 L685.0 589.7 L688.0 589.3 L691.0 588.9 L694.0 588.4 L697.0 588.0 L700.0 587.6 L703.0 587.1 L706.0 586.7 L709.0 586.6 L712.0 586.6 L715.0 586.6 L718.0 586.6 L721.0 586.6 L724.0 586.6 L727.0 586.6 L730.0 586.6 L733.0 586.6 L736.0 586.6 L739.0 586.6 L742.0 586.6 L745.0 586.6 L748.0 586.6 L751.0 586.6 L754.0 586.6 L757.0 586.6 L760.0 586.6 L763.0 586.6 L766.0 586.6 L769.0 586.6 L772.0 586.6 L775.0 586.6 L778.0 586.6 L781.0 586.6 L784.0 586.6 L787.0 586.6 L790.0 586.6 L793.0 586.6 L796.0 586.6 L799.0 586.6 L802.0 586.6 L805.0 586.6 L808.0 586.6 L811.0 586.6 L814.0 586.6 L817.0 586.6 L820.0 586.6 L823.0 586.6 L826.0 586.6 L829.0 586.6 L832.0 586.6 L835.0 586.6 L838.0 586.6 L841.0 586.6 L844.0 586.6 L847.0 586.6 L850.0 586.6 L853.0 586.6 L856.0 586.6 L859.0 586.6 L861.0 586.6 L864.2 609.5 L866.2 609.5 L867.6 605.7 L868.9 599.4 L870.2 594.1 L871.6 592.0 L873.0 594.1 L874.3 599.4 L875.6 605.7 L877.0 609.5 L1238.0 609.2" fill="none" stroke="#a6c797" stroke-width="1"/>
<path d="M341 697.5 L341.0 684.4 L346.0 686.3 L700.0 686.3 L1238.0 686.3 L1238 697.5Z" fill="#cfe1c4"/>
<path d="M341.0 684.4 L346.0 686.3 L700.0 686.3 L1238.0 686.3" fill="none" stroke="#a6c797" stroke-width="1"/>
<path d="M341 784.4 L1238 784.4" stroke="#c4c4c4" stroke-width="1" stroke-dasharray="2 1.5"/>
<path d="M340.8 563 L1238 563" stroke="#000" stroke-opacity="0.18" stroke-width="1" stroke-dasharray="1.5 2.3"/>
<path d="M340.8 586.5 L1238 586.5" stroke="#000" stroke-opacity="0.18" stroke-width="1" stroke-dasharray="1.5 2.3"/>
<path d="M340.80 563 L340.80 610" stroke="#000" stroke-opacity="0.18" stroke-width="1" stroke-dasharray="1.5 2.3"/>
<path d="M415.55 563 L415.55 610" stroke="#000" stroke-opacity="0.18" stroke-width="1" stroke-dasharray="1.5 2.3"/>
<path d="M490.30 563 L490.30 610" stroke="#000" stroke-opacity="0.18" stroke-width="1" stroke-dasharray="1.5 2.3"/>
<path d="M565.05 563 L565.05 610" stroke="#000" stroke-opacity="0.18" stroke-width="1" stroke-dasharray="1.5 2.3"/>
<path d="M639.80 563 L639.80 610" stroke="#000" stroke-opacity="0.18" stroke-width="1" stroke-dasharray="1.5 2.3"/>
<path d="M714.55 563 L714.55 610" stroke="#000" stroke-opacity="0.18" stroke-width="1" stroke-dasharray="1.5 2.3"/>
<path d="M789.30 563 L789.30 610" stroke="#000" stroke-opacity="0.18" stroke-width="1" stroke-dasharray="1.5 2.3"/>
<path d="M864.05 563 L864.05 610" stroke="#000" stroke-opacity="0.18" stroke-width="1" stroke-dasharray="1.5 2.3"/>
<path d="M938.80 563 L938.80 610" stroke="#000" stroke-opacity="0.18" stroke-width="1" stroke-dasharray="1.5 2.3"/>
<path d="M1013.55 563 L1013.55 610" stroke="#000" stroke-opacity="0.18" stroke-width="1" stroke-dasharray="1.5 2.3"/>
<path d="M1088.30 563 L1088.30 610" stroke="#000" stroke-opacity="0.18" stroke-width="1" stroke-dasharray="1.5 2.3"/>
<path d="M1163.05 563 L1163.05 610" stroke="#000" stroke-opacity="0.18" stroke-width="1" stroke-dasharray="1.5 2.3"/>
<path d="M340.8 610 L1238 610" stroke="#000" stroke-opacity="0.15" stroke-width="1" stroke-dasharray="2 2"/>
<path d="M340.8 650 L1238 650" stroke="#000" stroke-opacity="0.18" stroke-width="1" stroke-dasharray="1.5 2.3"/>
<path d="M340.8 673.75 L1238 673.75" stroke="#000" stroke-opacity="0.18" stroke-width="1" stroke-dasharray="1.5 2.3"/>
<path d="M340.80 650 L340.80 697.5" stroke="#000" stroke-opacity="0.18" stroke-width="1" stroke-dasharray="1.5 2.3"/>
<path d="M415.55 650 L415.55 697.5" stroke="#000" stroke-opacity="0.18" stroke-width="1" stroke-dasharray="1.5 2.3"/>
<path d="M490.30 650 L490.30 697.5" stroke="#000" stroke-opacity="0.18" stroke-width="1" stroke-dasharray="1.5 2.3"/>
<path d="M565.05 650 L565.05 697.5" stroke="#000" stroke-opacity="0.18" stroke-width="1" stroke-dasharray="1.5 2.3"/>
<path d="M639.80 650 L639.80 697.5" stroke="#000" stroke-opacity="0.18" stroke-width="1" stroke-dasharray="1.5 2.3"/>
<path d="M714.55 650 L714.55 697.5" stroke="#000" stroke-opacity="0.18" stroke-width="1" stroke-dasharray="1.5 2.3"/>
<path d="M789.30 650 L789.30 697.5" stroke="#000" stroke-opacity="0.18" stroke-width="1" stroke-dasharray="1.5 2.3"/>
<path d="M864.05 650 L864.05 697.5" stroke="#000" stroke-opacity="0.18" stroke-width="1" stroke-dasharray="1.5 2.3"/>
<path d="M938.80 650 L938.80 697.5" stroke="#000" stroke-opacity="0.18" stroke-width="1" stroke-dasharray="1.5 2.3"/>
<path d="M1013.55 650 L1013.55 697.5" stroke="#000" stroke-opacity="0.18" stroke-width="1" stroke-dasharray="1.5 2.3"/>
<path d="M1088.30 650 L1088.30 697.5" stroke="#000" stroke-opacity="0.18" stroke-width="1" stroke-dasharray="1.5 2.3"/>
<path d="M1163.05 650 L1163.05 697.5" stroke="#000" stroke-opacity="0.18" stroke-width="1" stroke-dasharray="1.5 2.3"/>
<path d="M340.8 697.5 L1238 697.5" stroke="#000" stroke-opacity="0.15" stroke-width="1" stroke-dasharray="2 2"/>
<path d="M340.8 737.3 L1238 737.3" stroke="#000" stroke-opacity="0.18" stroke-width="1" stroke-dasharray="1.5 2.3"/>
<path d="M340.8 760.8499999999999 L1238 760.8499999999999" stroke="#000" stroke-opacity="0.18" stroke-width="1" stroke-dasharray="1.5 2.3"/>
<path d="M340.80 737.3 L340.80 784.4" stroke="#000" stroke-opacity="0.18" stroke-width="1" stroke-dasharray="1.5 2.3"/>
<path d="M415.55 737.3 L415.55 784.4" stroke="#000" stroke-opacity="0.18" stroke-width="1" stroke-dasharray="1.5 2.3"/>
<path d="M490.30 737.3 L490.30 784.4" stroke="#000" stroke-opacity="0.18" stroke-width="1" stroke-dasharray="1.5 2.3"/>
<path d="M565.05 737.3 L565.05 784.4" stroke="#000" stroke-opacity="0.18" stroke-width="1" stroke-dasharray="1.5 2.3"/>
<path d="M639.80 737.3 L639.80 784.4" stroke="#000" stroke-opacity="0.18" stroke-width="1" stroke-dasharray="1.5 2.3"/>
<path d="M714.55 737.3 L714.55 784.4" stroke="#000" stroke-opacity="0.18" stroke-width="1" stroke-dasharray="1.5 2.3"/>
<path d="M789.30 737.3 L789.30 784.4" stroke="#000" stroke-opacity="0.18" stroke-width="1" stroke-dasharray="1.5 2.3"/>
<path d="M864.05 737.3 L864.05 784.4" stroke="#000" stroke-opacity="0.18" stroke-width="1" stroke-dasharray="1.5 2.3"/>
<path d="M938.80 737.3 L938.80 784.4" stroke="#000" stroke-opacity="0.18" stroke-width="1" stroke-dasharray="1.5 2.3"/>
<path d="M1013.55 737.3 L1013.55 784.4" stroke="#000" stroke-opacity="0.18" stroke-width="1" stroke-dasharray="1.5 2.3"/>
<path d="M1088.30 737.3 L1088.30 784.4" stroke="#000" stroke-opacity="0.18" stroke-width="1" stroke-dasharray="1.5 2.3"/>
<path d="M1163.05 737.3 L1163.05 784.4" stroke="#000" stroke-opacity="0.18" stroke-width="1" stroke-dasharray="1.5 2.3"/>
<path d="M340.8 784.4 L1238 784.4" stroke="#000" stroke-opacity="0.15" stroke-width="1" stroke-dasharray="2 2"/>
</svg>
<div class="t" style="right:945px;top:553.6px;font-size:8.8px;color:#444">100%</div>
<div class="t" style="right:945px;top:577.1px;font-size:8.8px;color:#444">50%</div>
<div class="t" style="right:945px;top:600.6px;font-size:8.8px;color:#444">0</div>
<div class="t" style="left:341.30px;top:614.51px;font-size:9.2px;color:#333;font-weight:normal;">3:15:56 PM</div>
<div class="t" style="left:416.05px;top:614.51px;font-size:9.2px;color:#333;font-weight:normal;">3:16:31 PM</div>
<div class="t" style="left:490.80px;top:614.51px;font-size:9.2px;color:#333;font-weight:normal;">3:17:07 PM</div>
<div class="t" style="left:565.55px;top:614.51px;font-size:9.2px;color:#333;font-weight:normal;">3:17:42 PM</div>
<div class="t" style="left:640.30px;top:614.51px;font-size:9.2px;color:#333;font-weight:normal;">3:18:18 PM</div>
<div class="t" style="left:715.05px;top:614.51px;font-size:9.2px;color:#333;font-weight:normal;">3:18:53 PM</div>
<div class="t" style="left:789.80px;top:614.51px;font-size:9.2px;color:#333;font-weight:normal;">3:19:29 PM</div>
<div class="t" style="left:864.55px;top:614.51px;font-size:9.2px;color:#333;font-weight:normal;">3:20:05 PM</div>
<div class="t" style="left:939.30px;top:614.51px;font-size:9.2px;color:#333;font-weight:normal;">3:20:40 PM</div>
<div class="t" style="left:1014.05px;top:614.51px;font-size:9.2px;color:#333;font-weight:normal;">3:21:16 PM</div>
<div class="t" style="left:1088.80px;top:614.51px;font-size:9.2px;color:#333;font-weight:normal;">3:21:51 PM</div>
<div class="t" style="left:1163.55px;top:614.51px;font-size:9.2px;color:#333;font-weight:normal;">3:22:27 PM</div>
<div class="t" style="left:285px;top:586.5px;font-size:10.2px;color:#555;transform:translate(-50%,-50%) rotate(-90deg);transform-origin:center">CPU</div>
<div class="t" style="right:945px;top:640.6px;font-size:8.8px;color:#444">100%</div>
<div class="t" style="right:945px;top:664.3px;font-size:8.8px;color:#444">50%</div>
<div class="t" style="right:945px;top:688.1px;font-size:8.8px;color:#444">0</div>
<div class="t" style="left:341.30px;top:702.01px;font-size:9.2px;color:#333;font-weight:normal;">3:15:56 PM</div>
<div class="t" style="left:416.05px;top:702.01px;font-size:9.2px;color:#333;font-weight:normal;">3:16:31 PM</div>
<div class="t" style="left:490.80px;top:702.01px;font-size:9.2px;color:#333;font-weight:normal;">3:17:07 PM</div>
<div class="t" style="left:565.55px;top:702.01px;font-size:9.2px;color:#333;font-weight:normal;">3:17:42 PM</div>
<div class="t" style="left:640.30px;top:702.01px;font-size:9.2px;color:#333;font-weight:normal;">3:18:18 PM</div>
<div class="t" style="left:715.05px;top:702.01px;font-size:9.2px;color:#333;font-weight:normal;">3:18:53 PM</div>
<div class="t" style="left:789.80px;top:702.01px;font-size:9.2px;color:#333;font-weight:normal;">3:19:29 PM</div>
<div class="t" style="left:864.55px;top:702.01px;font-size:9.2px;color:#333;font-weight:normal;">3:20:05 PM</div>
<div class="t" style="left:939.30px;top:702.01px;font-size:9.2px;color:#333;font-weight:normal;">3:20:40 PM</div>
<div class="t" style="left:1014.05px;top:702.01px;font-size:9.2px;color:#333;font-weight:normal;">3:21:16 PM</div>
<div class="t" style="left:1088.80px;top:702.01px;font-size:9.2px;color:#333;font-weight:normal;">3:21:51 PM</div>
<div class="t" style="left:1163.55px;top:702.01px;font-size:9.2px;color:#333;font-weight:normal;">3:22:27 PM</div>
<div class="t" style="left:285px;top:673.75px;font-size:11.5px;color:#555;transform:translate(-50%,-50%) rotate(-90deg);transform-origin:center">Memory</div>
<div class="t" style="right:945px;top:727.9px;font-size:8.8px;color:#444">100%</div>
<div class="t" style="right:945px;top:751.4px;font-size:8.8px;color:#444">50%</div>
<div class="t" style="right:945px;top:775.0px;font-size:8.8px;color:#444">0</div>
<div class="t" style="left:341.30px;top:788.91px;font-size:9.2px;color:#333;font-weight:normal;">3:15:56 PM</div>
<div class="t" style="left:416.05px;top:788.91px;font-size:9.2px;color:#333;font-weight:normal;">3:16:31 PM</div>
<div class="t" style="left:490.80px;top:788.91px;font-size:9.2px;color:#333;font-weight:normal;">3:17:07 PM</div>
<div class="t" style="left:565.55px;top:788.91px;font-size:9.2px;color:#333;font-weight:normal;">3:17:42 PM</div>
<div class="t" style="left:640.30px;top:788.91px;font-size:9.2px;color:#333;font-weight:normal;">3:18:18 PM</div>
<div class="t" style="left:715.05px;top:788.91px;font-size:9.2px;color:#333;font-weight:normal;">3:18:53 PM</div>
<div class="t" style="left:789.80px;top:788.91px;font-size:9.2px;color:#333;font-weight:normal;">3:19:29 PM</div>
<div class="t" style="left:864.55px;top:788.91px;font-size:9.2px;color:#333;font-weight:normal;">3:20:05 PM</div>
<div class="t" style="left:939.30px;top:788.91px;font-size:9.2px;color:#333;font-weight:normal;">3:20:40 PM</div>
<div class="t" style="left:1014.05px;top:788.91px;font-size:9.2px;color:#333;font-weight:normal;">3:21:16 PM</div>
<div class="t" style="left:1088.80px;top:788.91px;font-size:9.2px;color:#333;font-weight:normal;">3:21:51 PM</div>
<div class="t" style="left:1163.55px;top:788.91px;font-size:9.2px;color:#333;font-weight:normal;">3:22:27 PM</div>
<div class="t" style="left:285px;top:760.8499999999999px;font-size:11.2px;color:#555;transform:translate(-50%,-50%) rotate(-90deg);transform-origin:center">Swap</div>
</body></html>
